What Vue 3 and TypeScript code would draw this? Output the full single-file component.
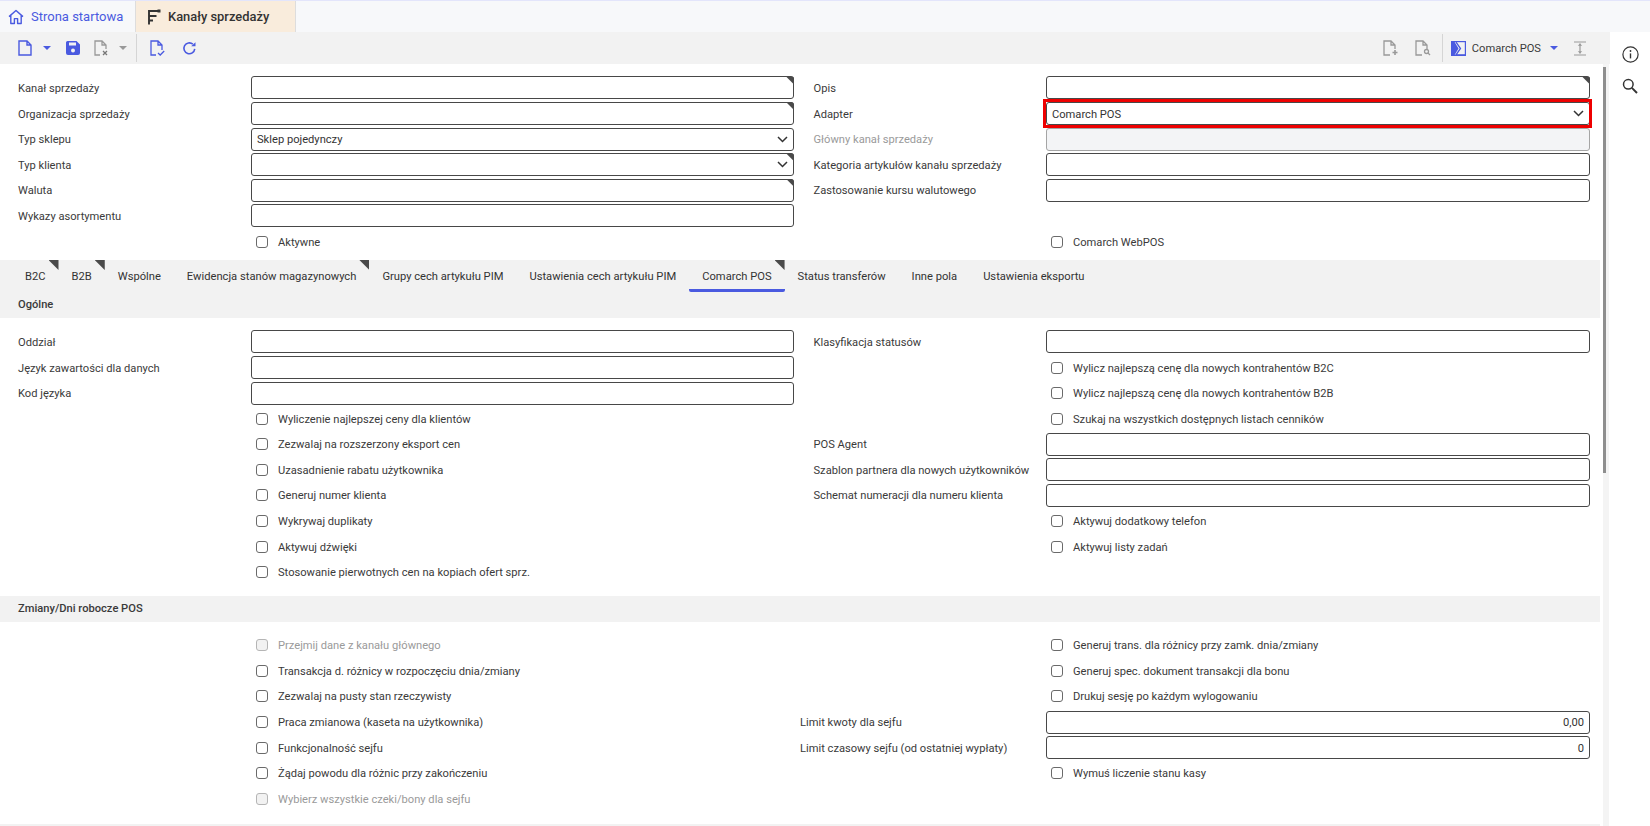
<script setup lang="ts">
interface Cell {
  kind: 'input' | 'select' | 'check' | 'empty'
  label?: string
  text?: string
  corner?: boolean
  disabled?: boolean
  value?: string
  num?: boolean
  marked?: boolean
  wide?: boolean
}
const inp = (label: string, corner = false): Cell => ({ kind: 'input', label, corner })
const chk = (text: string, disabled = false): Cell => ({ kind: 'check', text, disabled })
const none: Cell = { kind: 'empty' }

const header: [Cell, Cell][] = [
  [inp('Kanał sprzedaży', true), inp('Opis', true)],
  [inp('Organizacja sprzedaży', true), { kind: 'select', label: 'Adapter', value: 'Comarch POS', marked: true }],
  [{ kind: 'select', label: 'Typ sklepu', value: 'Sklep pojedynczy' }, { kind: 'input', label: 'Główny kanał sprzedaży', disabled: true }],
  [{ kind: 'select', label: 'Typ klienta', corner: true }, inp('Kategoria artykułów kanału sprzedaży')],
  [inp('Waluta', true), inp('Zastosowanie kursu walutowego')],
  [inp('Wykazy asortymentu'), none],
  [chk('Aktywne'), chk('Comarch WebPOS')],
]
const general: [Cell, Cell][] = [
  [inp('Oddział'), inp('Klasyfikacja statusów')],
  [inp('Język zawartości dla danych'), chk('Wylicz najlepszą cenę dla nowych kontrahentów B2C')],
  [inp('Kod języka'), chk('Wylicz najlepszą cenę dla nowych kontrahentów B2B')],
  [chk('Wyliczenie najlepszej ceny dla klientów'), chk('Szukaj na wszystkich dostępnych listach cenników')],
  [chk('Zezwalaj na rozszerzony eksport cen'), inp('POS Agent')],
  [chk('Uzasadnienie rabatu użytkownika'), inp('Szablon partnera dla nowych użytkowników')],
  [chk('Generuj numer klienta'), inp('Schemat numeracji dla numeru klienta')],
  [chk('Wykrywaj duplikaty'), chk('Aktywuj dodatkowy telefon')],
  [chk('Aktywuj dźwięki'), chk('Aktywuj listy zadań')],
  [chk('Stosowanie pierwotnych cen na kopiach ofert sprz.'), none],
]
const shifts: [Cell, Cell][] = [
  [chk('Przejmij dane z kanału głównego', true), chk('Generuj trans. dla różnicy przy zamk. dnia/zmiany')],
  [chk('Transakcja d. różnicy w rozpoczęciu dnia/zmiany'), chk('Generuj spec. dokument transakcji dla bonu')],
  [chk('Zezwalaj na pusty stan rzeczywisty'), chk('Drukuj sesję po każdym wylogowaniu')],
  [chk('Praca zmianowa (kaseta na użytkownika)'), { kind: 'input', label: 'Limit kwoty dla sejfu', value: '0,00', num: true, wide: true }],
  [chk('Funkcjonalność sejfu'), { kind: 'input', label: 'Limit czasowy sejfu (od ostatniej wypłaty)', value: '0', num: true, wide: true }],
  [chk('Żądaj powodu dla różnic przy zakończeniu'), chk('Wymuś liczenie stanu kasy')],
  [chk('Wybierz wszystkie czeki/bony dla sejfu', true), none],
]
const sections = { header, general, shifts }
const tabs = [
  { name: 'B2C', corner: true },
  { name: 'B2B', corner: true },
  { name: 'Wspólne' },
  { name: 'Ewidencja stanów magazynowych', corner: true },
  { name: 'Grupy cech artykułu PIM' },
  { name: 'Ustawienia cech artykułu PIM' },
  { name: 'Comarch POS', corner: true, active: true },
  { name: 'Status transferów' },
  { name: 'Inne pola' },
  { name: 'Ustawienia eksportu' },
]
</script>

<template>
  <div class="page">
    <header class="topbar">
      <div class="home-tab">
        <svg width="16" height="16" viewBox="0 0 16 16" fill="none" stroke="#4a5ae0" stroke-width="1.4" stroke-linejoin="round"><path d="M1 7.6 8 1.5l7 6.1M2.8 6.4v8.1h3.6V9.6h3.2v4.9h3.6V6.4" /></svg>
        <span>Strona startowa</span>
      </div>
      <div class="active-tab">
        <svg width="14" height="16" viewBox="0 0 14 16" fill="none" stroke="#333" stroke-width="1.9"><path d="M2 15.5V2h9M2 7h7.5M2 11.5h4" /><rect x="10.5" y=".5" width="3" height="3" fill="#333" stroke="none" /></svg>
        <span>Kanały sprzedaży</span>
      </div>
    </header>

    <div class="workspace">
      <main class="main">
        <div class="toolbar">
          <svg class="ic first" width="14" height="16" viewBox="0 0 14 16" fill="none" stroke="#4a5ae0" stroke-width="1.4"><path d="M1 1h8l4 4v10H1zM9 1v4h4" /></svg>
          <span class="caret"></span>
          <svg class="ic save" width="16" height="16" viewBox="0 0 16 16"><path d="M2.5 1h9L15 4.5V13a2 2 0 0 1-2 2H3a2 2 0 0 1-2-2V2.5A1.5 1.5 0 0 1 2.5 1z" fill="#4a5ae0" /><rect x="4" y="2.5" width="7" height="3" fill="#f2f2f2" /><circle cx="8" cy="10.5" r="2" fill="#f2f2f2" /></svg>
          <svg class="ic filex" width="16" height="16" viewBox="0 0 16 16" fill="none" stroke="#999" stroke-width="1.3"><path d="M6 15H1V1h7l4 4v4M8 1v4h4" /><path d="M9 11l4 4M13 11l-4 4" stroke="#777" /></svg>
          <span class="caret gray"></span>
          <span class="sep"></span>
          <svg class="ic filecheck" width="16" height="16" viewBox="0 0 16 16" fill="none" stroke="#4a5ae0" stroke-width="1.3"><path d="M6 15H1V1h7l4 4v5M8 1v4h4" /><path d="M8 13l2.2 2 4-4" /></svg>
          <svg class="ic refresh" width="15" height="15" viewBox="0 0 16 16" fill="none" stroke="#4a5ae0" stroke-width="1.7"><path d="M13.6 8.5A5.8 5.8 0 1 1 11.6 3.4" /><path d="M9.8 5.6h4.6V1.2z" fill="#4a5ae0" stroke="none" /></svg>
          <span class="spacer"></span>
          <svg class="ic" width="16" height="16" viewBox="0 0 16 16" fill="none" stroke="#999" stroke-width="1.3"><path d="M7 15H1V1h7l4 4v4M8 1v4h4" /><path d="M12 10v5M9.5 12.5h5" stroke-width="1.6" /></svg>
          <svg class="ic filesearch" width="16" height="16" viewBox="0 0 16 16" fill="none" stroke="#999" stroke-width="1.3"><path d="M7 15H1V1h7l4 4v4M8 1v4h4" /><circle cx="11.5" cy="11.5" r="2" /><path d="M13 13l2 2" /></svg>
          <span class="sep sep-right"></span>
          <svg class="ic" width="15" height="15" viewBox="0 0 15 15"><rect x=".6" y=".6" width="13.8" height="13.8" fill="none" stroke="#4a5ae0" stroke-width="1.2" /><path d="M0 0h3l4.5 7.5L3 15H0z" fill="#4a5ae0" /><path d="M5 1.2l4.5 6.3L5 13.8h9" fill="none" stroke="#4a5ae0" stroke-width="1.3" /></svg>
          <span class="tool-label">Comarch POS</span>
          <span class="caret tool-caret"></span>
          <svg class="ic collapse" width="14" height="15" viewBox="0 0 14 15" fill="none" stroke="#999" stroke-width="1.2"><path d="M1 1h12M1 14h12M7 2.5v10" /><path d="M4.8 4.8 7 2.4l2.2 2.4zM4.8 10.2 7 12.6l2.2-2.4z" fill="#999" stroke="none" /></svg>
        </div>

        <div class="scroll-track"><div class="scroll-thumb"></div></div>

        <template v-for="(rows, key) in sections" :key="key">
          <div v-if="key === 'general'" class="band tabs-band">
            <nav class="tabs">
              <div v-for="t in tabs" :key="t.name" class="tab" :class="{ active: t.active }">
                {{ t.name }}<i v-if="t.corner" class="tab-corner"></i>
              </div>
            </nav>
            <div class="band-title">Ogólne</div>
          </div>
          <div v-if="key === 'shifts'" class="band section-band"><div class="band-title">Zmiany/Dni robocze POS</div></div>

          <section class="form" :class="`form-${key}`">
            <div v-for="(row, i) in rows" :key="i" class="row">
              <template v-for="(cell, j) in row" :key="j">
                <div class="label" :class="{ dim: cell.disabled, wide: cell.wide, 'right-col': j === 1 }">
                  <template v-if="cell.kind !== 'check'">{{ cell.label }}</template>
                </div>
                <div class="control">
                  <label v-if="cell.kind === 'check'" class="check" :class="{ dim: cell.disabled }"><i class="box"></i><span class="txt">{{ cell.text }}</span></label>
                  <div v-else-if="cell.kind !== 'empty'" class="field" :class="{ disabled: cell.disabled, num: cell.num, marked: cell.marked }">
                    <span class="txt">{{ cell.value }}</span>
                    <svg v-if="cell.kind === 'select'" class="chev" width="11" height="7" viewBox="0 0 11 7" fill="none" stroke="#333" stroke-width="1.5"><path d="M1 1l4.5 4.5L10 1" /></svg>
                    <i v-if="cell.corner" class="corner"></i>
                  </div>
                </div>
              </template>
            </div>
          </section>
        </template>
        <div class="band bottom-band"></div>
      </main>

      <aside class="side">
        <svg width="17" height="17" viewBox="0 0 17 17" fill="none" stroke="#333" stroke-width="1.2"><circle cx="8.5" cy="8.5" r="7.6" /><path d="M8.5 7.4v5" stroke-width="1.4" /><circle cx="8.5" cy="5" r=".9" fill="#333" stroke="none" /></svg>
        <svg width="16" height="16" viewBox="0 0 16 16" fill="none" stroke="#333" stroke-width="1.5"><circle cx="6.3" cy="6.3" r="4.8" /><path d="M9.9 9.9 15 15" stroke-width="1.9" /></svg>
      </aside>
    </div>
  </div>
</template>

<style>
html, body { margin: 0; padding: 0; background: #fff; overflow: hidden; }
</style>

<style scoped>
* { box-sizing: border-box; }
.page { width: 1650px; height: 826px; overflow: hidden; font-family: Roboto, "Liberation Sans", sans-serif; font-size: 11.15px; color: #3a3a3a; background: #fff; }
.topbar { height: 32px; display: flex; background: #f7f8fa; border-top: 1px solid #e3e5fb; }
.home-tab { width: 135px; display: flex; align-items: center; gap: 7px; padding-left: 8px; color: #4a5ae0; font-size: 13px; }
.active-tab { width: 161px; display: flex; align-items: center; gap: 7px; padding-left: 11px; background: #f9ecdc; border-left: 1px solid #ddd; border-right: 1px solid #ddd; color: #333; font-size: 12.9px; font-weight: 500; }
.workspace { display: flex; height: 794px; }
.main { position: relative; width: 1610px; }
.side { flex: 1; display: flex; flex-direction: column; align-items: center; gap: 15px; padding-top: 14px; }
.toolbar { height: 32px; display: flex; align-items: center; background: #f2f2f2; padding-left: 18px; padding-right: 23px; }
.ic { flex: none; }
.caret { width: 0; height: 0; margin-left: 11px; border-left: 4px solid transparent; border-right: 4px solid transparent; border-top: 4px solid #4a5ae0; }
.caret.gray { border-top-color: #999; margin-left: 9px; }
.save { margin-left: 14px; }
.filex { margin-left: 13px; }
.sep { width: 1px; height: 28px; background: #d5d5d5; margin-left: 9px; }
.filecheck { margin-left: 13px; }
.refresh { margin-left: 16px; }
.spacer { flex: 1; }
.filesearch { margin-left: 16px; }
.sep-right { margin-left: 11px; margin-right: 8px; }
.tool-label { margin-left: 6px; color: #3a3a3a; }
.tool-caret { margin-left: 9px; }
.collapse { margin-left: 15px; }
.scroll-track { position: absolute; left: 1603px; top: 32px; width: 6px; height: 762px; background: #f4f4f4; }
.scroll-thumb { margin-top: 3px; width: 3px; height: 406px; background: #8e8e8e; }
.form { padding-left: 18px; }
.form-header { padding-top: 11.2px; }
.form-general { padding-top: 11.2px; }
.form-shifts { padding-top: 10.6px; }
.row { display: grid; grid-template-columns: 233px 543px 252px 544px; height: 25.6px; align-items: center; }
.label { white-space: nowrap; padding-top: 1px; }
.label.right-col { margin-left: 19.5px; }
.label.wide { margin-left: 6px; }
.dim { color: #9a9a9a; }
.control { min-width: 0; }
.txt { padding-top: 1px; }
.field { position: relative; height: 23px; display: flex; align-items: center; justify-content: space-between; padding: 0 5px; border: 1px solid #484848; border-radius: 3px; background: #fff; color: #333; }
.field.disabled { background: #f3f4f6; border-color: #a5a5a5; }
.field.num { justify-content: flex-end; }
.field.marked::before { content: ""; position: absolute; inset: -4px -3px -4px -4px; border: 3px solid #ee0000; pointer-events: none; }
.corner { position: absolute; right: -1px; top: -1px; width: 8px; height: 8px; background: #4a4a4a; clip-path: polygon(0 0, 100% 0, 100% 100%); border-top-right-radius: 3px; }
.check { display: flex; align-items: center; padding-left: 5px; }
.box { flex: none; width: 12px; height: 12px; margin-right: 10px; border: 1px solid #6a6a6a; border-radius: 3px; background: #fff; }
.check.dim .box { background: #f2f2f2; border-color: #b5b5b5; }
.band { background: #f2f2f2; width: 1600px; }
.tabs-band { height: 58px; margin-top: 5.6px; }
.tabs { display: flex; height: 32px; padding-left: 12px; font-size: 11.18px; }
.tab { position: relative; height: 32px; padding: 10.5px 13px 0; white-space: nowrap; color: #333; }
.tab.active { border-bottom: 3px solid #4a5ae0; border-bottom-left-radius: 2px; border-bottom-right-radius: 2px; }
.tab-corner { position: absolute; right: 0; top: 0; width: 10px; height: 10px; background: #4a4a4a; clip-path: polygon(0 0, 100% 0, 100% 100%); }
.band-title { padding-left: 18px; font-weight: 500; line-height: 26px; color: #3a3a3a; }
.section-band { height: 26px; margin-top: 10.8px; }
.bottom-band { height: 4px; margin-top: 12.2px; }
</style>
